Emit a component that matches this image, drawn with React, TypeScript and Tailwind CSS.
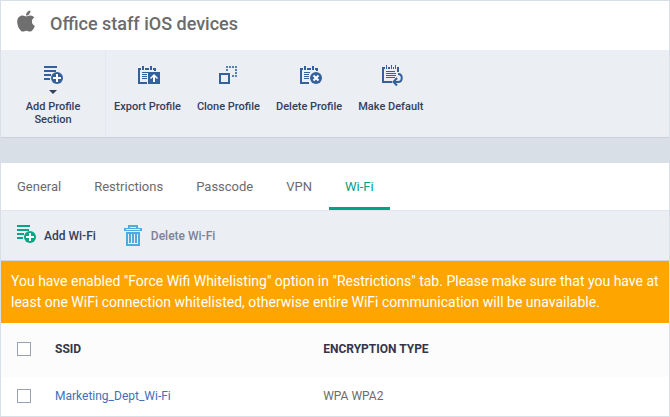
import type { ReactNode } from 'react'
import { FaApple } from 'react-icons/fa'

const NAVY = '#34619d'

function AddListIcon({ color }: { color: string }) {
  return (
    <>
      <g fill={color} shapeRendering="crispEdges">
        <rect x="0" y="0" width="13" height="2" />
        <rect x="0" y="4" width="12" height="2" />
        <rect x="0" y="8" width="7" height="2" />
        <rect x="0" y="12" width="6" height="2" />
      </g>
      <circle cx="13" cy="12" r="6" fill={color} />
      <path d="M13 8v8M9 12h8" stroke="#fff" strokeWidth="2" fill="none" />
    </>
  )
}

function Notebook() {
  return (
    <g fill={NAVY} shapeRendering="crispEdges">
      <path d="M0 2h3v2H2v12h7v2H0zM7 2h4v2H7zM15 2h3v3h-2V4h-1z" />
      <path d="M4 0h2v4H4zM12 0h2v4h-2z" />
      <path d="M4 6h6v1H4zM4 8h5v1H4zM4 10h5v1H4zM4 12h5v1H4z" />
    </g>
  )
}

function ExportIcon() {
  return (
    <>
      <Notebook />
      <rect x="10" y="6" width="12" height="12" fill={NAVY} />
      <path d="M16 8l4 4-1 1-2-2v5h-2v-5l-2 2-1-1z" fill="#fff" />
    </>
  )
}

function CloneIcon() {
  return (
    <>
      <rect x="1" y="8" width="9" height="9" fill="none" stroke={NAVY} strokeWidth="2" shapeRendering="crispEdges" />
      <path
        d="M7 0h2v2H7zM10 0h2v2h-2zM13 0h2v2h-2zM16 0h2v2h-2zM16 3h2v2h-2zM16 6h2v2h-2zM16 9h2v2h-2zM13 9h2v2h-2zM7 3h2v2H7z"
        fill={NAVY}
        opacity="0.8"
        shapeRendering="crispEdges"
      />
    </>
  )
}

function DeleteIcon() {
  return (
    <>
      <Notebook />
      <circle cx="16" cy="12" r="6" fill={NAVY} />
      <path d="M13.5 9.5l5 5M18.5 9.5l-5 5" stroke="#fff" strokeWidth="2" />
    </>
  )
}

function DefaultIcon() {
  return (
    <>
      <g fill={NAVY} shapeRendering="crispEdges">
        <path d="M0 1h3v2H2v12h8v2H0zM6 1h2v2H6zM11 1h1v2h-1zM15 1h2v5h-2z" />
        <path d="M4 -1h1v4H4zM9 -1h1v4H9zM13 -1h1v4h-1z" />
        <path d="M4 5h9v1H4zM4 7h10v1H4zM4 9h10v1H4zM4 11h9v1H4z" />
      </g>
      <path d="M16 8c5 0 5 8 0 8h-3M15 12l-3.5 4 3.5 3.5" fill="none" stroke={NAVY} strokeWidth="2" />
    </>
  )
}

function TrashIcon() {
  return (
    <svg viewBox="0 0 18 21" className="h-[21px] w-[18px]" fill="#52aadb" shapeRendering="crispEdges" aria-hidden="true">
      <path d="M4 0h10v3h4v3H0V3h4zM6 2v1h6V2zM2 4v1h14V4z" fillRule="evenodd" />
      <path d="M2 7h14v14H2zM4 9v10h10V9z" fillRule="evenodd" />
      <path d="M5 9h2v9H5zM8 9h2v9H8zM11 9h2v9h-2z" />
    </svg>
  )
}

const profileActions = [
  { label: 'Export Profile', icon: <ExportIcon /> },
  { label: 'Clone Profile', icon: <CloneIcon /> },
  { label: 'Delete Profile', icon: <DeleteIcon /> },
  { label: 'Make Default', icon: <DefaultIcon /> },
]

const tabs = ['General', 'Restrictions', 'Passcode', 'VPN', 'Wi-Fi']

const networks = [{ ssid: 'Marketing_Dept_Wi-Fi', encryption: 'WPA WPA2' }]

function ToolIcon({ children }: { children: ReactNode }) {
  return (
    <svg viewBox="-5 -2 28 22" className="h-[22px] w-7 overflow-visible" aria-hidden="true">
      {children}
    </svg>
  )
}

function Checkbox({ label }: { label: string }) {
  return (
    <input
      type="checkbox"
      aria-label={label}
      className="block size-3.5 appearance-none border border-[#98a0b2] bg-white checked:bg-[#00a285]"
    />
  )
}

export default function App() {
  return (
    <div className="border border-[#d8dfe7] bg-white font-['Roboto',sans-serif] text-[#6b6b6b]">
      <header className="flex h-[49px] items-center gap-3 px-[13px] pb-1">
        <FaApple className="mb-1.5 size-6 text-[#6f6f6f]" aria-hidden="true" />
        <h1 className="text-lg font-medium">Office staff iOS devices</h1>
      </header>

      <div className="flex min-h-[88px] border-b border-[#c9d2db] bg-[#ebeef3] text-[11px] leading-[13px] font-medium text-[#35405a]">
        <button className="flex w-[105px] shrink-0 flex-col items-center border-r border-[#e4e8ee] px-5 pt-3.5">
          <ToolIcon>
            <AddListIcon color={NAVY} />
          </ToolIcon>
          <svg viewBox="0 0 8 4" className="mt-1 mb-1.5 h-1 w-2" aria-hidden="true">
            <path d="M0 0h8L4 4z" fill="#35405a" />
          </svg>
          Add Profile Section
        </button>
        {profileActions.map(({ label, icon }) => (
          <button key={label} className="flex flex-col items-center gap-3.5 px-2 pt-3.5 whitespace-nowrap">
            <ToolIcon>{icon}</ToolIcon>
            {label}
          </button>
        ))}
      </div>

      <div className="h-[25px] bg-[#d8dfe7]" />

      <nav className="flex h-12 gap-px border-b border-[#e2e6ea] text-[13px]">
        {tabs.map(tab => (
          <a
            key={tab}
            href="#"
            aria-current={tab === 'Wi-Fi' ? 'page' : undefined}
            className="flex items-center border-y-3 border-transparent px-4 aria-[current=page]:border-b-[#00a285] aria-[current=page]:text-[#00a285]"
          >
            {tab}
          </a>
        ))}
      </nav>

      <div className="flex h-[50px] items-center border-b border-[#cfd6dd] bg-[#ebeef3] px-4 text-xs font-medium">
        <button className="flex items-center gap-2 text-[#35405a]">
          <svg viewBox="0 0 19 18" className="mb-1 h-[18px] w-[19px]" aria-hidden="true">
            <AddListIcon color="#0aa584" />
          </svg>
          Add Wi-Fi
        </button>
        <button className="ml-7 flex items-center gap-[9px] text-[#7b8394]">
          <TrashIcon />
          Delete Wi-Fi
        </button>
      </div>

      <p className="bg-[#ffa500] px-2.5 py-2.5 text-sm leading-[21px] text-white">
        You have enabled "Force Wifi Whitelisting" option in "Restrictions" tab. Please make sure that you have at
        least one WiFi connection whitelisted, otherwise entire WiFi communication will be unavailable.
      </p>

      <table className="w-full table-fixed text-left text-xs">
        <thead>
          <tr className="h-[54px] bg-[#fcfcfc] text-[#35354a]">
            <th className="w-[54px] pb-0.5 pl-4">
              <Checkbox label="Select all networks" />
            </th>
            <th className="w-2/5 pb-0.5 font-bold">SSID</th>
            <th className="pb-0.5 pl-px font-bold">ENCRYPTION TYPE</th>
          </tr>
        </thead>
        <tbody>
          {networks.map(({ ssid, encryption }) => (
            <tr key={ssid} className="h-[39px]">
              <td className="pb-px pl-4">
                <Checkbox label={`Select ${ssid}`} />
              </td>
              <td className="pb-px">
                <a href="#" className="text-[#3d71b8]">{ssid}</a>
              </td>
              <td className="pb-px pl-px">{encryption}</td>
            </tr>
          ))}
        </tbody>
      </table>
    </div>
  )
}
